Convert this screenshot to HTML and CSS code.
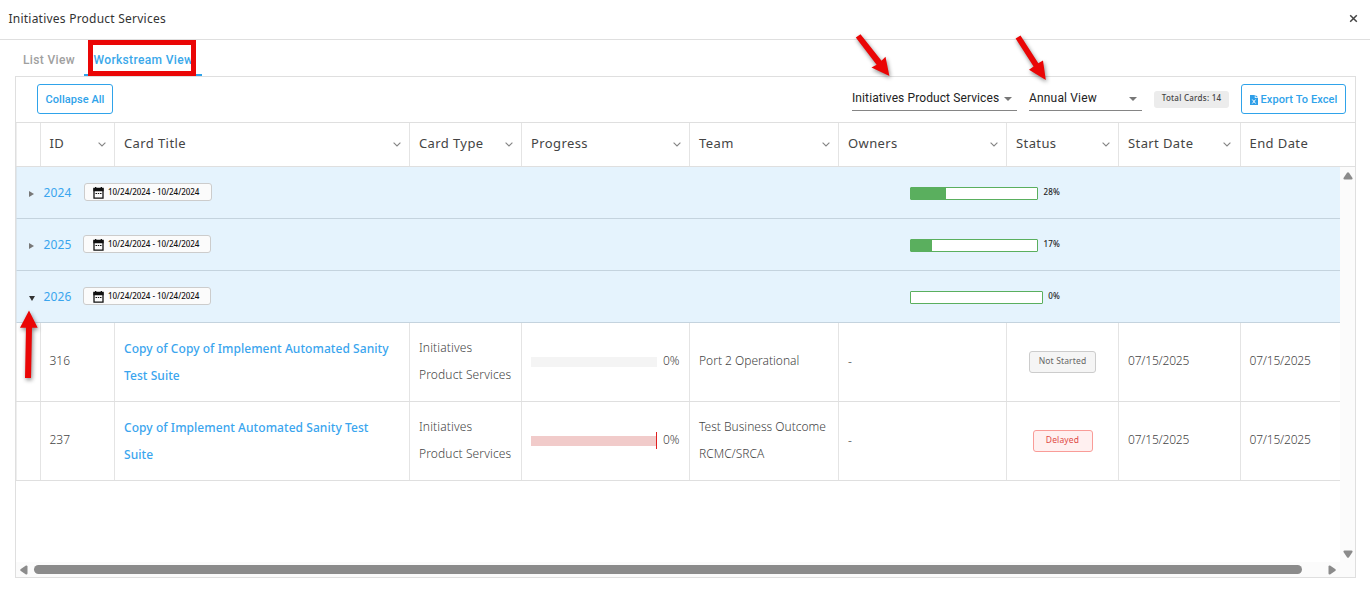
FILE: index.html
```html
<!DOCTYPE html>
<html lang="en">
<head>
<meta charset="utf-8">
<title>Initiatives Product Services</title>
<link rel="stylesheet" href="styles.css">
</head>
<body>
<svg class="defs" width="0" height="0">
  <symbol id="chev" viewBox="0 0 8 5"><path d="M.6.6 4 4 7.400.6" fill="none" stroke="#858585" stroke-width="1.1"/></symbol>
  <symbol id="cal" viewBox="0 0 11 12"><path d="M1 1.500h9v9.700H1z" fill="none" stroke="#111" stroke-width="1.300"/><path d="M.4 1.200h10.200v3H.4zM2 0h1.300v2H2zM7.700 0H9v2H7.700z" fill="#111"/><path d="M2.500 6.500H4M4.800 6.500h1.400M7 6.500h1.500" stroke="#111" stroke-width="1.200"/></symbol>
</svg>
<header class="topbar"><h1>Initiatives Product Services</h1>
  <svg class="close" width="9" height="9" viewBox="0 0 9 9"><path d="M1.200 1.200l6.600 6.600M7.800 1.200L1.200 7.800" stroke="#444" stroke-width="1.500"/></svg>
</header>
<nav class="tabs"><span class="tab">List View</span><span class="tab active"><span class="tab-label">Workstream View</span></span></nav>
<main class="panel">
  <div class="toolbar">
    <button class="btn collapse"><span>Collapse All</span></button>
    <div class="select wide"><span>Initiatives Product Services</span><i></i></div>
    <div class="select view"><span>Annual View</span><i></i></div>
    <div class="total"><span>Total Cards: 14</span></div>
    <button class="btn export"><svg width="8" height="10" viewBox="0 0 8 10"><path d="M0 0h4.800v3H8v7H0zM5.500 0L8 2.300H5.500z" fill="#2f9fe8"/><path d="M2.300 4.500l3.300 4M5.600 4.500L2.300 8.500" stroke="#fff" stroke-width="1"/></svg><span>Export To Excel</span></button>
  </div>
  <div class="row head">
    <div></div>
    <div><span>ID</span><svg><use href="#chev"/></svg></div>
    <div><span>Card Title</span><svg><use href="#chev"/></svg></div>
    <div><span>Card Type</span><svg><use href="#chev"/></svg></div>
    <div><span>Progress</span><svg><use href="#chev"/></svg></div>
    <div><span>Team</span><svg><use href="#chev"/></svg></div>
    <div><span>Owners</span><svg><use href="#chev"/></svg></div>
    <div><span>Status</span><svg><use href="#chev"/></svg></div>
    <div class="start"><span>Start Date</span><svg><use href="#chev"/></svg></div>
    <div><span>End Date</span></div>
  </div>
  <div class="body">
    <div class="rows">
      <div class="group"><i class="tri"></i><b>2024</b><span class="dates first"><svg width="11" height="12"><use href="#cal"/></svg><span>10/24/2024 - 10/24/2024</span></span>
        <div class="meter"><div class="track"><div class="fill" style="width:28%"></div></div><span>28%</span></div></div>
      <div class="group"><i class="tri"></i><b>2025</b><span class="dates"><svg width="11" height="12"><use href="#cal"/></svg><span>10/24/2024 - 10/24/2024</span></span>
        <div class="meter"><div class="track"><div class="fill" style="width:17%"></div></div><span>17%</span></div></div>
      <div class="group"><i class="tri open"></i><b>2026</b><span class="dates"><svg width="11" height="12"><use href="#cal"/></svg><span>10/24/2024 - 10/24/2024</span></span>
        <div class="meter"><div class="track"></div><span>0%</span></div></div>
      <div class="row card">
        <div></div><div><span>316</span></div>
        <div class="title"><a>Copy of Copy of Implement Automated Sanity<br>Test Suite</a></div>
        <div class="two"><span class="type">Initiatives<br>Product Services</span></div>
        <div class="prog"><div class="bar"></div><span>0%</span></div>
        <div><span>Port 2 Operational</span></div><div class="two"><span>-</span></div>
        <div class="status"><span class="chip">Not Started</span></div>
        <div><span class="date">07/15/2025</span></div><div><span class="date">07/15/2025</span></div>
      </div>
      <div class="row card">
        <div></div><div><span>237</span></div>
        <div class="title"><a>Copy of Implement Automated Sanity Test<br>Suite</a></div>
        <div class="two"><span class="type">Initiatives<br>Product Services</span></div>
        <div class="prog"><div class="bar late"></div><span>0%</span></div>
        <div class="two"><span>Test Business Outcome<br>RCMC/SRCA</span></div><div class="two"><span>-</span></div>
        <div class="status"><span class="chip delayed">Delayed</span></div>
        <div><span class="date">07/15/2025</span></div><div><span class="date">07/15/2025</span></div>
      </div>
    </div>
    <div class="vscroll">
      <svg width="10" height="8" viewBox="0 0 10 8"><path d="M4 .8Q5-.4 6 .8L9.500 6Q9.800 7.300 8.500 7.500h-7Q.2 7.300.5 6z" fill="#8b8b8b"/></svg>
      <svg width="10" height="8" viewBox="0 0 10 8"><path d="M4 7.200Q5 8.400 6 7.200L9.500 2Q9.800.7 8.500.5h-7Q.2.7.5 2z" fill="#8b8b8b"/></svg>
    </div>
  </div>
  <div class="hscroll">
    <svg width="8" height="10" viewBox="0 0 8 10"><path d="M.8 4Q-.4 5 .8 6L6 9.500Q7.300 9.800 7.500 8.500v-7Q7.300.2 6 .5z" fill="#8b8b8b"/></svg>
    <div class="thumb"></div>
    <svg width="8" height="10" viewBox="0 0 8 10"><path d="M7.200 4Q8.400 5 7.200 6L2 9.500Q.7 9.800.5 8.500v-7Q.7.2 2 .5z" fill="#8b8b8b"/></svg>
  </div>
</main>
<div class="marker"></div>
<svg class="arrows" width="1370" height="596" viewBox="0 0 1370 596">
  <g fill="#ea0606">
    <path d="M860.500 34.200L881.500 60.800 885.500 56.700 889.400 76 871.500 67.500 876.600 64.800 855.800 37.500z"/>
    <path d="M1020.500 35.500L1038.300 63.200 1043 60.500 1045.800 80 1029 69.700 1033.600 66.600 1015.600 38.500z"/>
    <path d="M29 310.500L37.700 327.700H32L31 378H25L26 327.700H20z"/>
  </g>
</svg>
</body>
</html>
```
FILE: styles.css
```css
* { box-sizing: border-box; }
body { margin: 0; width: 1370px; height: 596px; overflow: hidden; position: relative; background: #fff; font-family: "Noto Sans", sans-serif; color: #444; }
.defs { position: absolute; }
span, a, b { white-space: nowrap; }
.topbar { height: 40px; border-bottom: 1px solid #dfdfdf; display: flex; align-items: center; justify-content: space-between; padding: 0 12px 2px 8.500px; }
h1 { margin: 0; font-size: 12px; font-weight: 400; letter-spacing: 0.23px; color: #333; }
.tabs { height: 36px; display: flex; padding-left: 23px; font: 500 12px/40px Roboto, sans-serif; letter-spacing: 0.35px; color: #a0a0a0; }
.tab { width: 61px; }
.tab.active { width: 118px; padding-left: 9.500px; color: #3aa8ea; border-bottom: 2px solid #2fa3ea; }
.panel { margin-left: 15px; width: 1341px; height: 502px; border: 1px solid #dfdfdf; }
.toolbar { height: 46px; border-bottom: 1px solid #dfdfdf; display: flex; padding: 7px 9px 0 21px; font-family: Roboto, sans-serif; }
.btn { height: 30px; border: 1px solid #2fa3ea; border-radius: 3px; background: #fff; color: #2fa3ea; font: 500 11px/28px Roboto, sans-serif; padding: 1px 0 0; display: flex; align-items: center; justify-content: center; }
.collapse { width: 76px; letter-spacing: 0.05px; }
.export { width: 105px; gap: 3px; margin-left: 12px; letter-spacing: 0.1px; }
.select { height: 27px; border-bottom: 1px solid #858585; font-size: 12px; line-height: 28px; letter-spacing: 0.1px; color: #222; display: flex; align-items: center; justify-content: space-between; padding: 1px 5px 0 0; }
.select i { border: 4px solid transparent; border-top-color: #777; border-bottom: 0; margin-top: 2px; }
.select.wide { width: 165px; margin-left: auto; }
.select.view { width: 113px; margin-left: 12px; letter-spacing: 0.17px; }
.total { width: 75px; height: 17px; margin: 7px 0 0 12px; border-radius: 3px; background: #ececec; font: 500 8px/14px "Noto Sans", sans-serif; letter-spacing: 0.25px; text-align: center; }
.row { display: grid; grid-template-columns: 25px 74px 295px 112px 168px 149px 168px 112px 122px 1fr; }
.row > div { border-right: 1px solid #e4e4e4; padding-left: 9px; display: flex; align-items: center; }
.row > div:first-child { border-left: 1px solid #eee; }
.row > div:last-child { border-right: 0; padding-left: 8.500px; }
.row > div:nth-child(2) { padding-left: 8.500px; }
.head { height: 44px; border-bottom: 1px solid #dfdfdf; font-size: 13px; font-weight: 450; letter-spacing: 0.4px; color: #444; }
.head > div { justify-content: space-between; padding-right: 8px; }
.head > .start { padding-right: 9px; }
.head > div > span { padding-bottom: 3px; }
.head svg { width: 8px; height: 5px; }
.body { height: 395px; display: flex; }
.rows { flex: 1; }
.group { height: 52px; background: #e5f3fd; border-bottom: 1px solid #c4d3de; border-left: 1px solid #dce6ed; display: flex; align-items: center; padding-left: 12px; }
.tri { width: 5px; border: 3px solid transparent; border-left: 5px solid #777; border-right: 0; margin-top: 3px; }
.tri.open { border: 3px solid transparent; border-top: 5px solid #333; border-bottom: 0; width: 6px; margin-right: -1px; }
.group b { width: 42px; padding-left: 9.500px; font-size: 12px; font-weight: 450; color: #3aa5ee; letter-spacing: 0.15px; }
.dates { width: 128px; height: 18px; margin-left: 7px; border: 1px solid #ccc; border-radius: 3px; background: #fbfbfb; display: flex; align-items: center; gap: 4px; padding-left: 9px; font-size: 8px; font-weight: 500; letter-spacing: -0.04px; color: #111; margin-bottom: 1px; }
.dates svg { margin-top: 2px; }
.dates > span { padding-bottom: 1px; }
.dates.first { margin-left: 8px; padding-left: 8px; }
.meter { margin-left: auto; width: 150px; margin-right: 280px; display: flex; align-items: center; gap: 5px; font-size: 8px; font-weight: 500; letter-spacing: 0.2px; color: #222; }
.meter > span { padding-bottom: 2px; }
.track { flex: 1; height: 13px; border: 1px solid #5aaf5e; background: #fff; border-radius: 1px; margin-top: 2px; }
.fill { height: 100%; background: #5aaf5e; }
.card { height: 79px; border-bottom: 1px solid #dfdfdf; font-size: 12px; line-height: 27px; font-weight: 300; }
.card > div { padding-bottom: 3px; }
.card > .two { padding-bottom: 2px; }
.card > .title { padding-bottom: 0; }
.card a { color: #3aa5ee; font-weight: 500; letter-spacing: 0.06px; }
.type { letter-spacing: 0.13px; }
.date { letter-spacing: -0.2px; }
.bar { width: 126px; height: 10px; background: #f4f4f4; margin: 2px 6px 0 0; }
.bar.late { background: #f1cbca; position: relative; }
.bar.late::after { content: ""; position: absolute; right: 0; top: -4px; width: 1px; height: 17px; background: #e02020; }
.row > .status { justify-content: center; padding: 0; }
.chip { width: 67px; height: 22px; border: 1px solid #ccc; border-radius: 3px; background: #f5f5f5; font-size: 8.500px; line-height: 18px; letter-spacing: 0.15px; font-weight: 400; color: #666; text-align: center; }
.chip.delayed { width: 60px; color: #e04a45; background: #fff0f0; border-color: #f99c98; }
.vscroll { width: 15px; background: #fbfbfb; display: flex; flex-direction: column; align-items: center; justify-content: space-between; padding: 5px 0 4px; }
.hscroll { height: 15px; background: #fbfbfb; display: flex; align-items: center; padding-left: 4px; }
.thumb { width: 1268px; height: 9px; border-radius: 5px; background: #8b8b8b; margin: 0 26px 0 6px; }
.marker { position: absolute; left: 88px; top: 40px; width: 108px; height: 36px; border: 5px solid #ea0606; }
.arrows { position: absolute; left: 0; top: 0; filter: drop-shadow(1px 2px 2px #0007); }
```
